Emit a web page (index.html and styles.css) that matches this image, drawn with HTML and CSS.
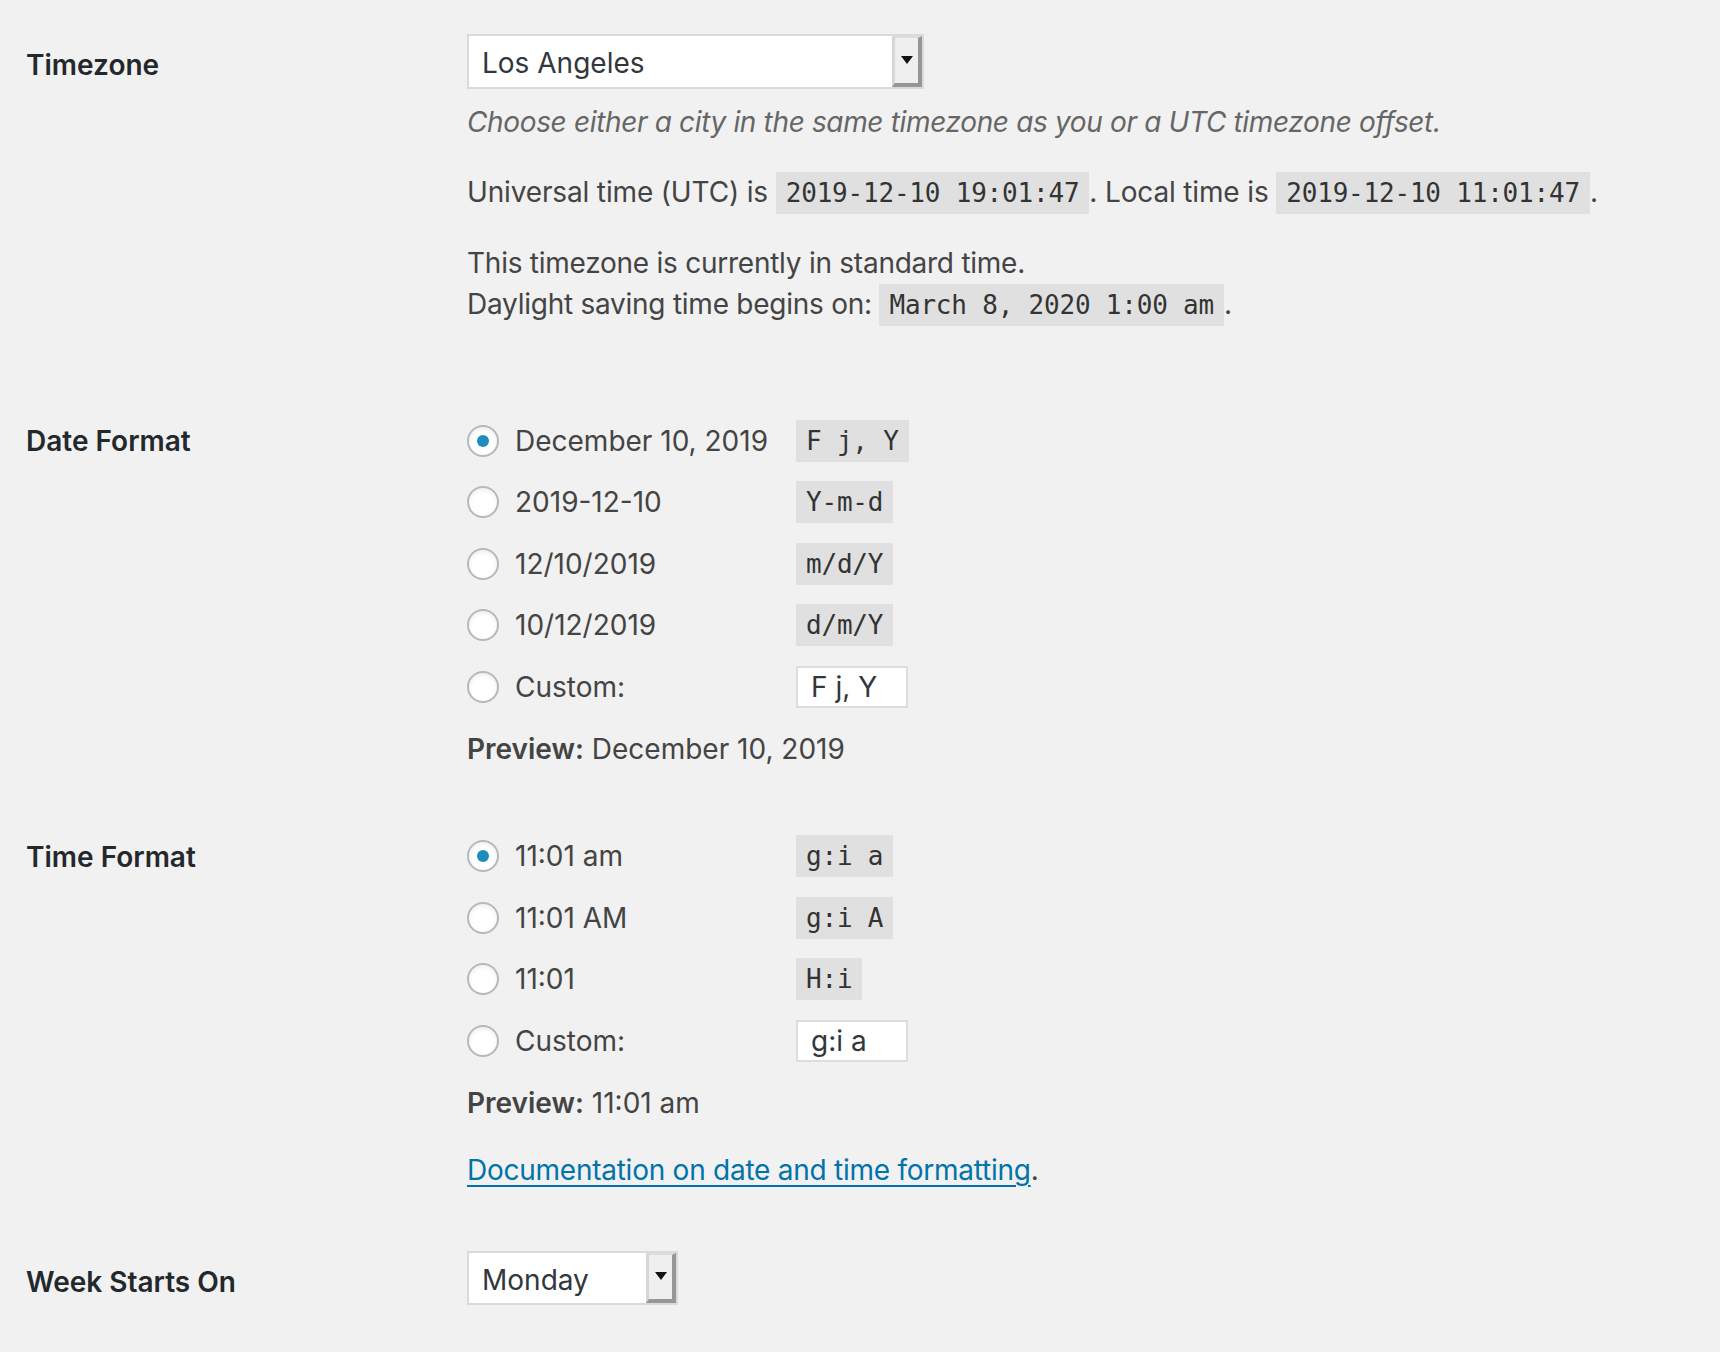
FILE: index.html
```html
<!DOCTYPE html>
<html lang="en">
<head>
	<meta charset="UTF-8">
	<title>General Settings</title>
	<link rel="stylesheet" href="styles.css">
</head>
<body>
	<div class="settings">

		<div class="row row_timezone">
			<div class="row_label">Timezone</div>
			<div class="row_field">
				<div class="select select_wide">
					<span class="select_value">Los Angeles</span>
					<span class="select_button"><span class="select_arrow"></span></span>
				</div>
				<p class="description">Choose either a city in the same timezone as you or a UTC timezone offset.</p>
				<p class="tz_line">Universal time (UTC) is <code>2019-12-10 19:01:47</code>. Local time is <code>2019-12-10 11:01:47</code>.</p>
				<p class="tz_dst">This timezone is currently in standard time.<br>Daylight saving time begins on: <code>March 8, 2020 1:00 am</code>.</p>
			</div>
		</div>

		<div class="row row_date">
			<div class="row_label">Date Format</div>
			<div class="row_field">
				<div class="choice">
					<span class="radio checked"></span><span class="choice_text">December 10, 2019</span><code>F j, Y</code>
				</div>
				<div class="choice">
					<span class="radio"></span><span class="choice_text">2019-12-10</span><code>Y-m-d</code>
				</div>
				<div class="choice">
					<span class="radio"></span><span class="choice_text">12/10/2019</span><code>m/d/Y</code>
				</div>
				<div class="choice">
					<span class="radio"></span><span class="choice_text">10/12/2019</span><code>d/m/Y</code>
				</div>
				<div class="choice">
					<span class="radio"></span><span class="choice_text">Custom:</span><span class="custom_input">F j, Y</span>
				</div>
				<p class="preview"><strong>Preview:</strong> December 10, 2019</p>
			</div>
		</div>

		<div class="row row_time">
			<div class="row_label">Time Format</div>
			<div class="row_field">
				<div class="choice">
					<span class="radio checked"></span><span class="choice_text">11:01 am</span><code>g:i a</code>
				</div>
				<div class="choice">
					<span class="radio"></span><span class="choice_text">11:01 AM</span><code>g:i A</code>
				</div>
				<div class="choice">
					<span class="radio"></span><span class="choice_text">11:01</span><code>H:i</code>
				</div>
				<div class="choice">
					<span class="radio"></span><span class="choice_text">Custom:</span><span class="custom_input">g:i a</span>
				</div>
				<p class="preview"><strong>Preview:</strong> 11:01 am</p>
				<p class="doc_line"><a href="#">Documentation on date and time formatting</a>.</p>
			</div>
		</div>

		<div class="row row_week">
			<div class="row_label">Week Starts On</div>
			<div class="row_field">
				<div class="select select_narrow">
					<span class="select_value">Monday</span>
					<span class="select_button"><span class="select_arrow"></span></span>
				</div>
			</div>
		</div>

	</div>
</body>
</html>
```

FILE: styles.css
```css
html, body{
	margin: 0;
	background: #f1f1f1;
}
body{
	font-family: Inter, "Noto Sans", "Liberation Sans", sans-serif;
	font-size: 28px;
	color: #444;
}
p{
	margin: 0;
}
.settings{
	padding: 34px 0 0 26px;
}
.row{
	display: flex;
}
.row_label{
	width: 441px;
	flex: none;
	line-height: 62px;
	font-weight: 600;
	color: #23282d;
}
.row_field{
	flex: 1;
}
.row_date{
	margin-top: 84px;
}
.row_time{
	margin-top: 46px;
}
.row_week{
	margin-top: 61px;
}

/* fake select with old bevel button */
.select{
	display: flex;
	height: 55px;
	box-sizing: border-box;
	border: 2px solid #dadada;
	background: #fff;
}
.select_wide{
	width: 457px;
}
.select_narrow{
	width: 211px;
	height: 54px;
}
.select_value{
	flex: 1;
	padding: 3px 0 0 13px;
	line-height: 48px;
	color: #32373c;
}
.select_button{
	width: 30px;
	box-sizing: border-box;
	display: flex;
	align-items: center;
	justify-content: center;
	background: #efefef;
	border-style: solid;
	border-width: 2px 4px 4px 3px;
	border-color: #dcdcdc #969696 #969696 #d6d6d6;
}
.select_arrow{
	width: 0;
	height: 0;
	border-style: solid;
	border-width: 8px 6px 0 6px;
	border-color: #111 transparent transparent transparent;
	margin-top: -2px;
}

.description{
	margin-top: 13px;
	line-height: 40px;
	font-style: italic;
	color: #666;
	letter-spacing: -0.35px;
}
.tz_line{
	margin-top: 30px;
	line-height: 40px;
	letter-spacing: -0.15px;
}
.tz_dst{
	margin-top: 30px;
	line-height: 41px;
	letter-spacing: -0.25px;
}
code{
	font-family: "DejaVu Sans Mono", "Liberation Mono", monospace;
	font-size: 26px;
	letter-spacing: -0.2px;
	padding: 6px 10px;
	background: #e0e0e0;
	color: #333;
}

.choice{
	display: flex;
	align-items: center;
	height: 61.5px;
}
.radio{
	width: 32px;
	height: 32px;
	box-sizing: border-box;
	border: 2px solid #b4b9be;
	border-radius: 50%;
	background: #fff;
	box-shadow: inset 0 2px 4px rgba(0,0,0,0.07);
	display: flex;
	align-items: center;
	justify-content: center;
	flex: none;
}
.radio.checked::before{
	content: "";
	width: 12px;
	height: 12px;
	border-radius: 50%;
	background: #1e8cbe;
}
.choice_text{
	width: 281px;
	margin-left: 16px;
	flex: none;
}
.custom_input{
	width: 112px;
	height: 42px;
	box-sizing: border-box;
	border: 2px solid #dddddd;
	background: #fff;
	padding-left: 13px;
	line-height: 38px;
	color: #32373c;
}
.preview{
	line-height: 62px;
}
.preview strong{
	font-weight: 600;
}
.doc_line{
	margin-top: 16px;
	line-height: 40px;
}
.doc_line a{
	color: #0073aa;
	letter-spacing: -0.25px;
	text-decoration: underline;
	text-decoration-thickness: 2px;
	text-underline-offset: 5px;
}
```
